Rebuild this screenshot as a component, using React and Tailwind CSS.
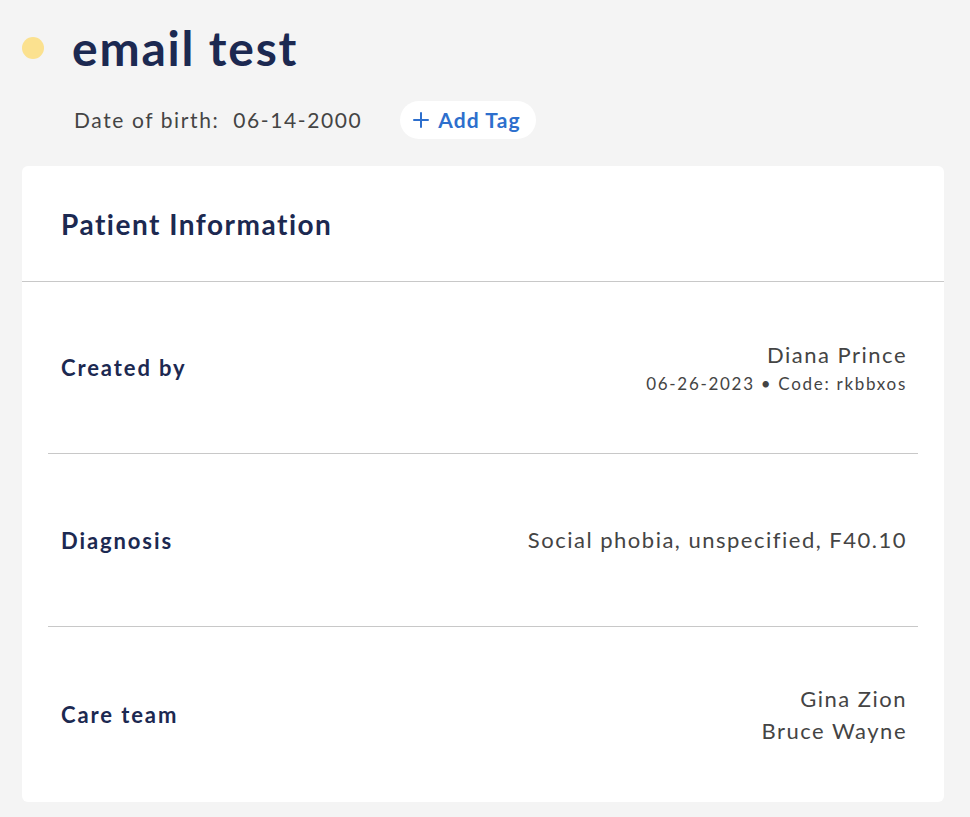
import React from "react";

const rows = [
  {
    label: "Created by",
    lines: ["Diana Prince"],
    sub: "06-26-2023 • Code: rkbbxos",
    height: "h-[172px]",
  },
  { label: "Diagnosis", lines: ["Social phobia, unspecified, F40.10"], height: "h-[173px]" },
  { label: "Care team", lines: ["Gina Zion", "Bruce Wayne"], height: "h-[175px]" },
];

const PlusIcon = () => (
  <svg width="16" height="16" viewBox="0 0 16 16" fill="none">
    <path d="M8 1v14M1 8h14" stroke="currentColor" strokeWidth="2" strokeLinecap="round" />
  </svg>
);

const App = () => {
  return (
    <div className="min-h-screen bg-[#f4f4f4] px-[22px] pt-[20px] pb-[15px] font-['Lato','Liberation_Sans',sans-serif]">
      <div className="flex items-center h-[56px]">
        <span className="w-[22px] h-[22px] rounded-full bg-[#fbe18f]" />
        <h1 className="ml-[28px] text-[48px] leading-none font-bold text-[#1c2951] tracking-[1.8px]">
          email test
        </h1>
      </div>

      <div className="flex items-center h-[38px] mt-[25px] ml-[52px]">
        <p className="text-[21px] text-[#444] tracking-[1.6px] whitespace-pre">Date of birth:  06-14-2000</p>
        <button className="ml-[38px] h-[38px] pl-[13px] pr-[15px] rounded-full bg-white flex items-center gap-[9px] text-[#2d6fcd] text-[21px] font-bold tracking-[1.1px]">
          <PlusIcon />
          Add Tag
        </button>
      </div>

      <div className="mt-[27px] bg-white rounded-[6px] w-[922px]">
        <div className="h-[116px] flex items-center px-[39px] border-b border-[#c8c8c8]">
          <h2 className="text-[28px] font-bold text-[#1c2951] tracking-[1.5px]">Patient Information</h2>
        </div>
        <div className="px-[26px]">
          {rows.map((row, i) => (
            <div
              key={row.label}
              className={
                i < rows.length - 1
                  ? `${row.height} flex items-center justify-between pl-[13px] pr-[11px] border-b border-[#c8c8c8]`
                  : `${row.height} flex items-center justify-between pl-[13px] pr-[11px]`
              }
            >
              <span className="text-[22px] font-bold text-[#1c2951] tracking-[1.9px]">{row.label}</span>
              <div className="text-right text-[#444]">
                {row.lines.map((line) => (
                  <div key={line} className="text-[22px] leading-[33px] -mt-px tracking-[1.5px]">
                    {line}
                  </div>
                ))}
                {row.sub && <div className="text-[17px] leading-[25px] tracking-[1.7px]">{row.sub}</div>}
              </div>
            </div>
          ))}
        </div>
      </div>
    </div>
  );
};

export default App;
